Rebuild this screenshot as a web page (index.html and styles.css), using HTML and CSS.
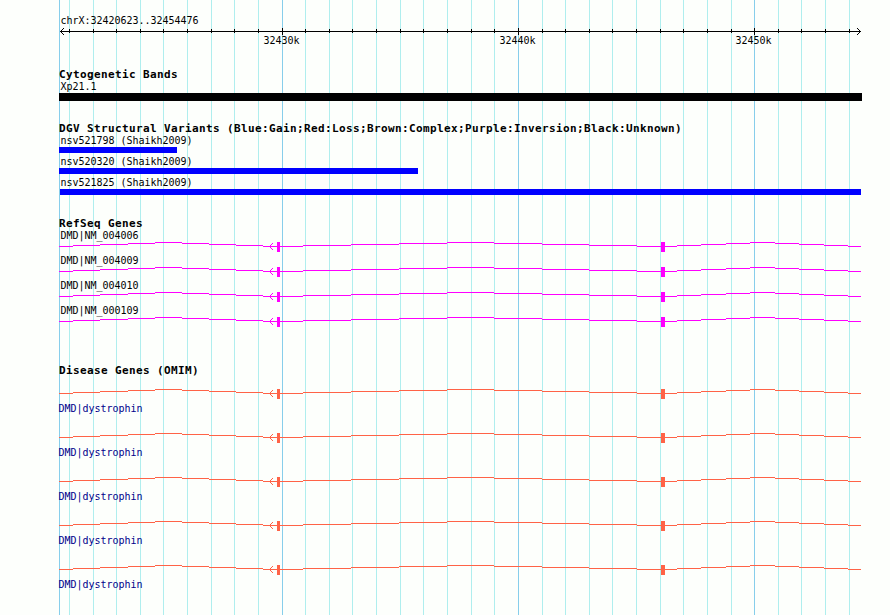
FILE: index.html
```
<!DOCTYPE html>
<html lang="en">
<head>
<meta charset="utf-8">
<title>chrX:32420623..32454476</title>
<link rel="stylesheet" href="styles.css">
</head>
<body>
<svg class="defs" width="0" height="0" aria-hidden="true">
  <defs>
    <g id="gene">
      <path class="line" d="M59 4.5H73M73 3.5H100M100 2.5H128M128 1.5H155M155 .5H182M182 1.5H209M209 2.5H236M236 3.5H263M263 4.5H303M303 3.5H351M351 2.5H399M399 1.5H447M447 .5H494M494 1.5H542M542 2.5H589M589 3.5H637M637 4.5H677M677 3.5H701M701 2.5H726M726 1.5H750M750 .5H775M775 1.5H799M799 2.5H824M824 3.5H848M848 4.5H861"/>
      <path class="exon" d="M270 3h1v1h-1zM271 2h1v1h-1zM272 1h1v1h-1zM270 5h1v1h-1zM271 6h1v1h-1zM272 7h1v1h-1z"/>
      <path class="exon" d="M277 0h3v10h-3zM661 0h4v10h-4z"/>
    </g>
  </defs>
</svg>
<main class="panel">
  <svg class="grid" width="890" height="615" aria-hidden="true">
    <path class="minor" d="M69.5 0V615M93.5 0V615M116.5 0V615M140.5 0V615M163.5 0V615M187.5 0V615M211.5 0V615M234.5 0V615M258.5 0V615M305.5 0V615M329.5 0V615M352.5 0V615M376.5 0V615M400.5 0V615M423.5 0V615M447.5 0V615M471.5 0V615M494.5 0V615M542.5 0V615M565.5 0V615M589.5 0V615M612.5 0V615M636.5 0V615M660.5 0V615M683.5 0V615M707.5 0V615M731.5 0V615M778.5 0V615M801.5 0V615M825.5 0V615M849.5 0V615"/>
    <path class="major" d="M59.5 0V615M282.5 0V615M518.5 0V615M754.5 0V615"/>
  </svg>
  <header class="ruler">
    <div class="label">chrX:32420623..32454476</div>
    <svg class="scale" width="890" height="8" aria-hidden="true">
      <path d="M60 3.5H861M69.5 1V5M93.5 1V5M116.5 1V5M140.5 1V5M163.5 1V5M187.5 1V5M211.5 1V5M234.5 1V5M258.5 1V5M305.5 1V5M329.5 1V5M352.5 1V5M376.5 1V5M400.5 1V5M423.5 1V5M447.5 1V5M471.5 1V5M494.5 1V5M542.5 1V5M565.5 1V5M589.5 1V5M612.5 1V5M636.5 1V5M660.5 1V5M683.5 1V5M707.5 1V5M731.5 1V5M778.5 1V5M801.5 1V5M825.5 1V5M849.5 1V5M282.5 0V7M518.5 0V7M754.5 0V7"/>
      <path d="M61 2.5h1M62 1.5h1M63 .5h1M61 4.5h1M62 5.5h1M63 6.5h1M859 2.5h1M858 1.5h1M857 .5h1M859 4.5h1M858 5.5h1M857 6.5h1"/>
    </svg>
    <div class="ticks"><span>32430k</span><span>32440k</span><span>32450k</span></div>
  </header>
  <section class="track bands">
    <h2>Cytogenetic Bands</h2>
    <div class="label">Xp21.1</div>
    <div class="band"></div>
  </section>
  <section class="track variants">
    <h2>DGV Structural Variants (Blue:Gain;Red:Loss;Brown:Complex;Purple:Inversion;Black:Unknown)</h2>
    <div class="variant"><div class="label">nsv521798 (Shaikh2009)</div><div class="bar short"></div></div>
    <div class="variant"><div class="label">nsv520320 (Shaikh2009)</div><div class="bar medium"></div></div>
    <div class="variant"><div class="label">nsv521825 (Shaikh2009)</div><div class="bar full"></div></div>
  </section>
  <section class="track refseq">
    <h2>RefSeq Genes</h2>
    <div class="gene"><div class="label">DMD|NM_004006</div><svg width="890" height="10"><use href="#gene"/></svg></div>
    <div class="gene"><div class="label">DMD|NM_004009</div><svg width="890" height="10"><use href="#gene"/></svg></div>
    <div class="gene"><div class="label">DMD|NM_004010</div><svg width="890" height="10"><use href="#gene"/></svg></div>
    <div class="gene"><div class="label">DMD|NM_000109</div><svg width="890" height="10"><use href="#gene"/></svg></div>
  </section>
  <section class="track disease">
    <h2>Disease Genes (OMIM)</h2>
    <div class="gene"><svg width="890" height="10"><use href="#gene"/></svg><div class="label">DMD|dystrophin</div></div>
    <div class="gene"><svg width="890" height="10"><use href="#gene"/></svg><div class="label">DMD|dystrophin</div></div>
    <div class="gene"><svg width="890" height="10"><use href="#gene"/></svg><div class="label">DMD|dystrophin</div></div>
    <div class="gene"><svg width="890" height="10"><use href="#gene"/></svg><div class="label">DMD|dystrophin</div></div>
    <div class="gene"><svg width="890" height="10"><use href="#gene"/></svg><div class="label">DMD|dystrophin</div></div>
  </section>
</main>
</body>
</html>
```
FILE: styles.css
```
body {
  margin: 0;
  background: #fdfffc;
  color: #000;
  font-family: "DejaVu Sans Mono", monospace;
}
svg { display: block; }
.defs { position: absolute; }
.panel {
  position: relative;
  z-index: 0;
  width: 890px;
  height: 615px;
  overflow: hidden;
}
.grid {
  position: absolute;
  top: 0;
  left: 0;
  z-index: -1;
  shape-rendering: crispEdges;
}
.minor { stroke: #afeeee; }
.major { stroke: #87ceeb; }
.label, .ticks {
  font-size: 10px;
  line-height: 12px;
  height: 12px;
  letter-spacing: -0.0205px;
  white-space: pre;
}
.label { padding-left: 60.5px; }
.ruler { padding-top: 15px; height: 53px; }
.scale {
  margin-top: 1px;
  stroke: #000;
  fill: none;
  shape-rendering: crispEdges;
}
.ticks {
  display: flex;
  gap: 200px;
  margin-top: -1px;
  padding-left: 263.5px;
}
.ticks span { width: 36px; }
h2 {
  margin: 0 0 0 59px;
  height: 13px;
  line-height: 13px;
  font-size: 11px;
  letter-spacing: 0.3775px;
  white-space: pre;
}
.bands { height: 54px; }
.band {
  margin-left: 59px;
  width: 803px;
  height: 8px;
  background: #000;
}
.variants { height: 95px; }
.variant { height: 21px; }
.bar { height: 6px; margin-left: 59px; background: #00f; }
.short { width: 118px; }
.medium { width: 359px; }
.full { margin-left: 60px; width: 801px; }
.line {
  fill: none;
  stroke: currentColor;
  shape-rendering: crispEdges;
}
.exon { fill: currentColor; shape-rendering: crispEdges; }
.refseq { height: 147px; }
.refseq .gene { height: 25px; }
.refseq svg { color: #f0f; }
.disease svg { color: #ff6347; }
.disease .gene { height: 44px; }
.disease h2 { margin-bottom: 12px; }
.disease .label { padding-left: 58.5px; margin-top: 4px; color: #00008b; }
```
